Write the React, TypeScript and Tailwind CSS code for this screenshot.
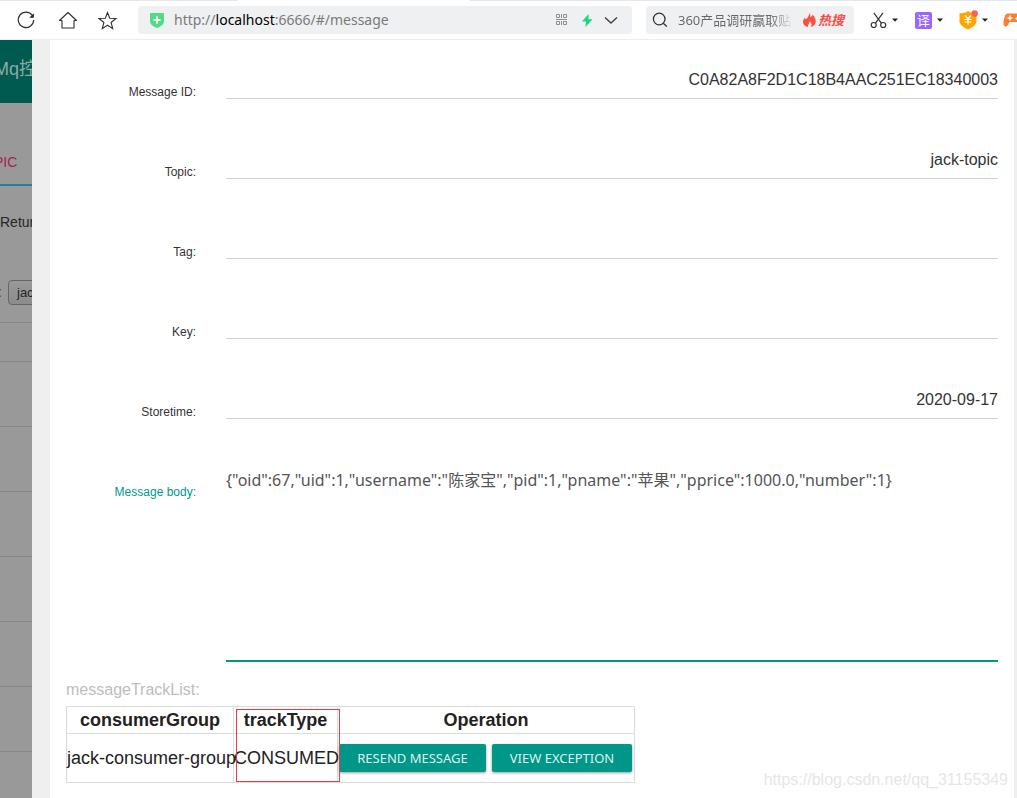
import React from "react";

const fields = [
  { id: "message-id", label: "Message ID:", value: "C0A82A8F2D1C18B4AAC251EC18340003" },
  { id: "topic", label: "Topic:", value: "jack-topic" },
  { id: "tag", label: "Tag:", value: "" },
  { id: "key", label: "Key:", value: "" },
  { id: "storetime", label: "Storetime:", value: "2020-09-17" },
];

const body =
  '{"oid":67,"uid":1,"username":"陈家宝","pid":1,"pname":"苹果","pprice":1000.0,"number":1}';

function Caret() {
  return (
    <svg width="6" height="4" viewBox="0 0 6 4" aria-hidden="true">
      <path d="M0 0.5h6L3 3.7z" fill="#222" />
    </svg>
  );
}

function Toolbar() {
  return (
    <header className="flex h-10 shrink-0 flex-col overflow-hidden border-b border-[#ececec] bg-white">
      <div className="flex h-px shrink-0 bg-[#e3e6ed]">
        <div className="ml-[238px] w-[232px] bg-white" />
      </div>
      <div className="flex h-[38px] items-center font-['Noto_Sans','Noto_Sans_CJK_SC',sans-serif]">
        <button aria-label="Reload" className="ml-4 shrink-0">
          <svg width="20" height="20" viewBox="0 0 20 20" fill="none" stroke="#303030" strokeWidth="1.2">
            <path d="M16.3 5.4A7.7 7.7 0 1 0 17.7 10" />
            <path d="M17.8 3.200v4.500h-4.500z" fill="#222" stroke="none" />
          </svg>
        </button>
        <button aria-label="Home" className="ml-[22px] shrink-0">
          <svg width="20" height="20" viewBox="0 0 20 20" fill="none" stroke="#303030" strokeWidth="1.1" strokeLinejoin="round" strokeLinecap="round">
            <path d="M1.500 10.500 10 2.500l8.500 8h-2.500v7.500H4v-7.500z" />
          </svg>
        </button>
        <button aria-label="Bookmark" className="ml-5 shrink-0">
          <svg width="20" height="20" viewBox="0 0 20 20" fill="none" stroke="#303030" strokeWidth="1.1" strokeLinejoin="miter">
            <path d="m9.500 2.500 2.200 5.700 6.300.3-4.900 4 1.600 6.100-5.200-3.400-5.200 3.400 1.600-6.100-4.900-4 6.300-.3z" />
          </svg>
        </button>
        <div className="ml-5 flex h-7 w-[494px] shrink-0 items-center rounded-[4px] bg-[#eff0f2]">
          <svg className="ml-3 shrink-0" width="14" height="15" viewBox="0 0 14 15" aria-hidden="true">
            <path d="M0 1Q0 0 1 0h12q1 0 1 1v7c0 4-4 5.800-7 7-3-1.200-7-3-7-7z" fill="#4fdc84" />
            <path d="M7 3.500v7M3.500 7h7" stroke="#fff" strokeWidth="2" />
          </svg>
          <div className="ml-[10px] flex-1 text-[14px] leading-5 whitespace-nowrap text-[#7a7a7a]">
            http://<span className="text-black">localhost</span>:6666/#/message
          </div>
          <button aria-label="QR code" className="shrink-0">
            <svg width="12" height="12" viewBox="0 0 12 12" fill="none" stroke="#8e8e8e">
              <path d="M.5.5h3v3h-3zM7.500.5h3v3h-3zM.5 7.500h3v3h-3zM7.500 7.500h3v3h-3zM5.500 0v4M5.500 7v4M0 5.500h11" />
            </svg>
          </button>
          <button aria-label="Speed mode" className="ml-[14px] shrink-0">
            <svg width="11" height="13" viewBox="0 0 11 13">
              <path d="M6.500 0 0 7.500h4L3.500 13 10.500 5.200H6.500z" fill="#1ed67c" />
            </svg>
          </button>
          <button aria-label="Address history" className="mr-[14px] ml-[11px] shrink-0">
            <svg width="14" height="9" viewBox="0 0 14 9" fill="none" stroke="#444" strokeWidth="1.500">
              <path d="m1 1.500 6 5.500 6-5.500" />
            </svg>
          </button>
        </div>
        <div className="ml-[14px] flex h-7 w-[208px] shrink-0 items-center rounded-[4px] bg-[#eff0f2]">
          <svg className="ml-[6px] shrink-0" width="16" height="16" viewBox="0 0 16 16" fill="none" stroke="#333" strokeWidth="1.300" aria-hidden="true">
            <circle cx="7.200" cy="7" r="5.800" />
            <path d="m11.300 11.200 3.500 3.300" />
          </svg>
          <div className="ml-[10px] w-[115px] overflow-hidden bg-linear-to-r from-[#666] from-80% to-[#eff0f2] bg-clip-text text-[13px] leading-5 whitespace-nowrap text-transparent">
            360产品调研赢取贴
          </div>
          <svg className="ml-[10px] shrink-0" width="13" height="14" viewBox="0 0 13 14" aria-hidden="true">
            <path d="M6.500 0c1 1.500 1 3 .5 4.300C8 4 9.500 3 9.500 1.500 12 4 13 6.500 12.700 9c-.3 2.500-2.200 4.200-4.700 5 1-2 .7-4-1.200-5.800C6.500 10 5 11 4.800 14 2 13.200 0 11.500 0 9c0-2 1-3.300 2-4.500.2 1 .5 1.500 1 1.800C5 4.500 6 2.500 6.500 0z" fill="#fa5040" />
          </svg>
          <span className="ml-[2px] text-[13px] leading-5 font-bold whitespace-nowrap text-[#fa4a44] italic">热搜</span>
        </div>
        <button aria-label="Screenshot" className="ml-4 flex shrink-0 items-center gap-[5px]">
          <svg width="17" height="18" viewBox="0 0 17 18" fill="none" stroke="#333" strokeWidth="1.200">
            <path d="m3.800 1.800 7.700 10.500M13 1.800l-7.700 10.500" />
            <circle cx="3.700" cy="14" r="2.500" />
            <circle cx="13.200" cy="14" r="2.500" />
          </svg>
          <Caret />
        </button>
        <button aria-label="Translate" className="ml-[17px] flex shrink-0 items-center gap-[5px]">
          <span className="flex h-[17px] w-[17px] items-center justify-center rounded-[2px] bg-[#9966ff] text-[13px] leading-4 text-white">译</span>
          <Caret />
        </button>
        <button aria-label="Payment protection" className="ml-4 flex shrink-0 items-center gap-[4px]">
          <svg width="19" height="20" viewBox="0 0 19 20">
            <path d="M9 1c2.500 2 5 2.200 8.500 2.200V11c0 4-4.500 6.500-8.500 8.500C5 17.500.500 15 .500 11V3.200C4 3.200 6.500 3 9 1z" fill="#ffa500" />
            <path d="m6 5.500 3 3.500 3-3.500M9 9v5.500M5.500 9.500h7M5.500 12h7" fill="none" stroke="#fff" strokeWidth="1.200" />
            <circle cx="15.700" cy="3.500" r="3.200" fill="#ff5e55" />
          </svg>
          <Caret />
        </button>
        <button aria-label="Games" className="ml-[15px] shrink-0">
          <svg width="22" height="16" viewBox="0 0 22 16">
            <path d="M5 1.500h12c3 0 4 5 4.500 9 .5 4-3 4.500-4.500 2l-1.500-2.500h-9L5 13C3.500 15.500 0 15 .5 10.500c.5-4 1.500-9 4.500-9z" fill="#ff7e32" />
            <path d="M7 3.500v5M4.500 6h5" stroke="#fff" strokeWidth="1.500" />
            <circle cx="14" cy="6.500" r="1.500" fill="#fff" />
          </svg>
        </button>
      </div>
    </header>
  );
}

function Backdrop() {
  return (
    <aside className="flex w-8 shrink-0 flex-col overflow-hidden bg-[#999] font-['Liberation_Sans','Noto_Sans_CJK_SC',sans-serif] whitespace-nowrap">
      <div className="flex h-[63px] shrink-0 items-center bg-[#005a4f] pb-1 text-[18px] text-[#8fa9a5]">
        <span className="-ml-[6px]">Mq控</span>
      </div>
      <div className="flex h-[83px] shrink-0 items-end border-b-2 border-[#2a7ba0]">
        <a href="#topic" className="-ml-[6px] pb-3 text-[14px] leading-5 text-[#a31f50]">PIC</a>
      </div>
      <div className="mt-[26px] text-[14px] leading-5 text-[#262626]">Retur</div>
      <div className="mt-12 flex h-[25px] shrink-0 items-center">
        <span className="-ml-[2px] w-[10px] shrink-0 text-[14px] text-[#444]">:</span>
        <button className="h-[25px] w-20 shrink-0 rounded-[4px] border border-[#666] bg-linear-to-b from-[#999] to-[#8c8c8c] pl-2 text-left text-[13px] text-[#262626]">
          jack-topic
        </button>
      </div>
      <div className="mt-[17px] h-10 shrink-0 border-y border-[#868686]" />
      {[1, 2, 3, 4, 5, 6].map((row) => (
        <div key={row} className="h-[65px] shrink-0 border-b border-[#868686]" />
      ))}
    </aside>
  );
}

function TrackTable() {
  const cell = "border border-[#dcdcdc] p-0";
  const button =
    "h-7 rounded-[2px] bg-[#009688] text-[13px] text-[#dff2f0] shadow-[0_1px_3px_rgba(0,0,0,0.4)] font-['Noto_Sans',sans-serif]";
  return (
    <div className="relative w-[569px]">
      <table className="w-full table-fixed border-collapse text-[18px] whitespace-nowrap text-[#222]">
        <colgroup>
          <col className="w-[167px]" />
          <col className="w-[104px]" />
          <col />
        </colgroup>
        <thead>
          <tr className="h-[27px] leading-6">
            <th className={cell}>consumerGroup</th>
            <th className={cell}>trackType</th>
            <th className={cell}>Operation</th>
          </tr>
        </thead>
        <tbody>
          <tr className="h-[49px] leading-6">
            <td className={cell}>jack-consumer-group</td>
            <td className={cell}>CONSUMED</td>
            <td className={cell}>
              <div className="flex gap-[6px] pl-px">
                <button className={`w-[147px] ${button}`}>RESEND MESSAGE</button>
                <button className={`w-[140px] ${button}`}>VIEW EXCEPTION</button>
              </div>
            </td>
          </tr>
        </tbody>
      </table>
      <div className="pointer-events-none absolute top-[3px] left-[170px] h-[73px] w-[104px] border border-[#f03a3a]" />
    </div>
  );
}

export default function App() {
  return (
    <div className="flex min-h-screen flex-col overflow-hidden bg-white">
      <Toolbar />
      <div className="flex flex-1">
        <Backdrop />
        <main className="relative min-w-0 flex-1 border-r-[3px] border-l-[18px] border-[#efefef] bg-white px-4 pt-[23px] pb-[15px] font-['Liberation_Sans',sans-serif]">
          <form className="flex flex-col gap-11">
            {fields.map((field) => (
              <div key={field.id} className="flex h-9 items-end gap-[30px]">
                <label htmlFor={field.id} className="w-[130px] shrink-0 text-right text-[12px] leading-[14px] text-[#333]">
                  {field.label}
                </label>
                <input
                  id={field.id}
                  readOnly
                  defaultValue={field.value}
                  className="h-9 min-w-0 flex-1 border-b border-[#d2d2d2] pb-[2px] text-right text-[16px] text-[#333] outline-none"
                />
              </div>
            ))}
            <div className="flex items-start gap-[30px]">
              <label htmlFor="message-body" className="w-[130px] shrink-0 pt-[22px] text-right text-[12px] leading-[14px] text-[#009688]">
                Message body:
              </label>
              <textarea
                id="message-body"
                readOnly
                defaultValue={body}
                className="h-[199px] min-w-0 flex-1 resize-none border-b-2 border-[#009688] pt-[5px] font-['Noto_Sans','Noto_Sans_CJK_SC',sans-serif] text-[16px] leading-6 text-[#555] outline-none"
              />
            </div>
          </form>
          <h2 className="mt-[18px] mb-[6px] text-[16px] leading-5 text-[#bdbdbd]">messageTrackList:</h2>
          <TrackTable />
          <div className="absolute right-[6px] bottom-2 text-[16px] leading-5 text-[#e6e6e6]">
            https://blog.csdn.net/qq_31155349
          </div>
        </main>
      </div>
    </div>
  );
}
